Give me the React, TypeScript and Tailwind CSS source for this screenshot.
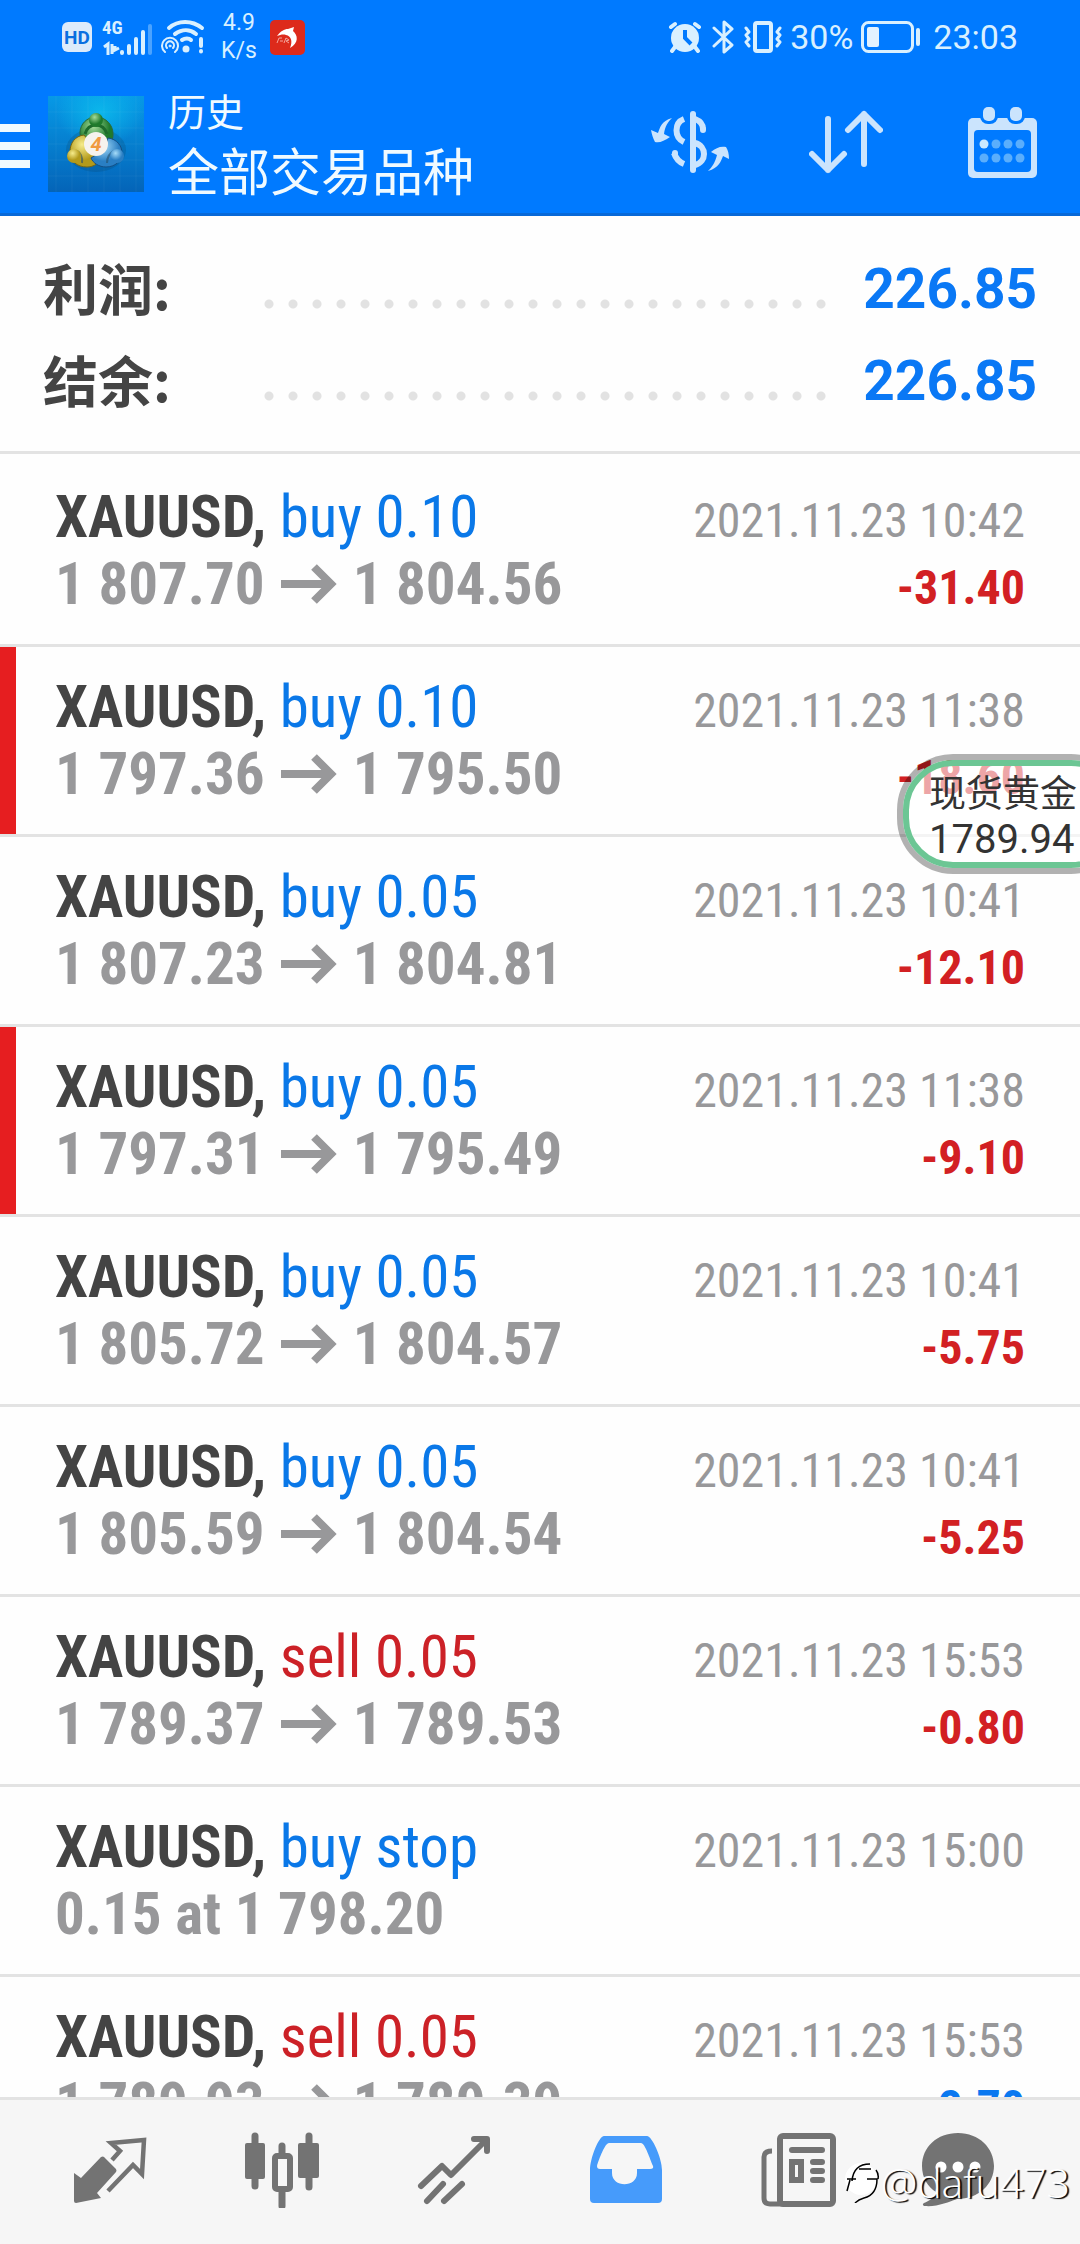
import React from 'react';

type Side = 'buy' | 'sell';

interface Deal {
    side: Side;
    label: string;
    open: string;
    close?: string;
    time: string;
    profit?: string;
    gain?: boolean;
    stopped?: boolean;
}

const deals: Deal[] = [
    { side: 'buy', label: 'buy 0.10', open: '1 807.70', close: '1 804.56', time: '2021.11.23 10:42', profit: '-31.40' },
    { side: 'buy', label: 'buy 0.10', open: '1 797.36', close: '1 795.50', time: '2021.11.23 11:38', profit: '-18.60', stopped: true },
    { side: 'buy', label: 'buy 0.05', open: '1 807.23', close: '1 804.81', time: '2021.11.23 10:41', profit: '-12.10' },
    { side: 'buy', label: 'buy 0.05', open: '1 797.31', close: '1 795.49', time: '2021.11.23 11:38', profit: '-9.10', stopped: true },
    { side: 'buy', label: 'buy 0.05', open: '1 805.72', close: '1 804.57', time: '2021.11.23 10:41', profit: '-5.75' },
    { side: 'buy', label: 'buy 0.05', open: '1 805.59', close: '1 804.54', time: '2021.11.23 10:41', profit: '-5.25' },
    { side: 'sell', label: 'sell 0.05', open: '1 789.37', close: '1 789.53', time: '2021.11.23 15:53', profit: '-0.80' },
    { side: 'buy', label: 'buy stop', open: '0.15 at 1 798.20', time: '2021.11.23 15:00' },
    { side: 'sell', label: 'sell 0.05', open: '1 789.93', close: '1 789.39', time: '2021.11.23 15:53', profit: '2.70', gain: true },
];

const totals = [
    { label: '利润:', value: '226.85' },
    { label: '结余:', value: '226.85' },
];

const StatusBar: React.FC = () => (
    <div className="flex h-[74px] items-center justify-between px-[62px] text-[#d9f0ff]">
        <div className="flex items-center">
            <span className="h-[30px] w-[30px] rounded-[6px] bg-[#dcebfb] text-center text-[19px] leading-[31px] font-bold text-[#0a6fe0]">HD</span>
            <div className="ml-[10px] h-[34px] w-[50px]">
                <div className="h-[16px] font-['Roboto_Condensed',sans-serif] text-[19px] leading-[16px] font-bold">4G</div>
                <svg className="-mt-[14px] h-[34px] w-[50px]" viewBox="0 0 50 34" fill="none" stroke="currentColor">
                    <path d="M2 25l4-3v11M10 22v10M13 24v4l4-2" strokeWidth="3" />
                    <path d="M20 30v1M27 24v7M34 17v14M41 10v21" strokeWidth="4" strokeLinecap="round" />
                    <path d="M48 4v27" stroke="#4ba3ff" strokeWidth="4" strokeLinecap="round" />
                </svg>
            </div>
            <svg className="ml-[9px] h-[34px] w-[44px]" viewBox="0 0 44 34" fill="none" stroke="currentColor" strokeLinecap="round">
                <path d="M8 8c9-8 23-8 33 0" strokeWidth="4" />
                <path d="M14 14c7-5 15-5 21 0" strokeWidth="4" />
                <path d="M21 20c3-2 7-2 9 0" strokeWidth="4" />
                <circle cx="25" cy="29" r="3.5" fill="currentColor" stroke="none" />
                <path d="M40 19v7M40 31v.5" strokeWidth="4" />
                <path d="M4 32a8 8 0 1 1 10 0M6 28a4 4 0 1 1 6 0" strokeWidth="2" />
                <circle cx="9" cy="26" r="1" fill="currentColor" />
            </svg>
            <div className="ml-[16px] w-[36px] text-center text-[23px] leading-[28px]">
                <div>4.9</div>
                <div>K/s</div>
            </div>
            <svg className="ml-[13px] h-[35px] w-[35px]" viewBox="0 0 35 35" fill="none">
                <rect width="35" height="35" rx="5" fill="#dd2a1b" />
                <path d="M7 16c4-5 7-7 11-7l6-2-1 4c5 4 6 12-3 17 3-7 1-12-4-13-3-1-6 0-9 1z" fill="#fff" />
                <path d="M7 23l2-5h3M10 21h3M14 23l2-5 3 2-3 1 3 2" stroke="#f3a59c" />
            </svg>
        </div>
        <div className="flex items-center text-[34px] leading-[40px]">
            <svg className="h-[32px] w-[34px]" viewBox="0 0 34 32">
                <path d="M3 6l4-3M31 6l-4-3M7 26l-3 4M27 26l3 4" stroke="currentColor" strokeWidth="4" strokeLinecap="round" />
                <circle cx="17" cy="17" r="14" fill="currentColor" />
                <path d="M17 9v8l6 6" stroke="#007aff" strokeWidth="4" fill="none" />
            </svg>
            <svg className="ml-[10px] h-[34px] w-[22px]" viewBox="0 0 22 34" fill="none" stroke="currentColor" strokeWidth="3" strokeLinecap="round" strokeLinejoin="round">
                <path d="M2 8l18 17-8 7V2l8 7L2 26" />
            </svg>
            <svg className="ml-[10px] h-[32px] w-[38px]" viewBox="0 0 38 32" fill="none" stroke="currentColor" strokeWidth="3" strokeLinecap="round" strokeLinejoin="round">
                <rect x="11" y="2" width="16" height="28" rx="2" strokeWidth="4" />
                <path d="M2 7l3 4-3 3 3 4-3 3 3 4M36 7l-3 4 3 3-3 4 3 3-3 4" />
            </svg>
            <span className="ml-[8px]">30%</span>
            <svg className="ml-[8px] h-[34px] w-[60px]" viewBox="0 0 60 34" fill="none">
                <rect x="1.5" y="2.5" width="50" height="29" rx="6" stroke="currentColor" strokeWidth="3" />
                <rect x="6" y="7" width="12" height="20" rx="2" fill="#e3f2ff" />
                <path d="M57 10v14" stroke="currentColor" strokeWidth="4" strokeLinecap="round" />
            </svg>
            <span className="ml-[12px]">23:03</span>
        </div>
    </div>
);

const AppLogo: React.FC = () => (
    <svg className="h-[96px] w-[96px]" viewBox="0 0 96 96">
        <defs>
            <linearGradient id="sky" x1="0" y1="0" x2="0" y2="1">
                <stop offset="0" stopColor="#0799e6" />
                <stop offset="1" stopColor="#0464b8" />
            </linearGradient>
            <radialGradient id="glow">
                <stop offset="0" stopColor="#0cc0ee" stopOpacity=".8" />
                <stop offset="1" stopColor="#0cc0ee" stopOpacity="0" />
            </radialGradient>
            <radialGradient id="green" cx=".4" cy=".3">
                <stop offset="0" stopColor="#a5dc9a" />
                <stop offset="1" stopColor="#1f7a2c" />
            </radialGradient>
            <radialGradient id="yellow" cx=".4" cy=".3">
                <stop offset="0" stopColor="#f6ec8c" />
                <stop offset="1" stopColor="#b39a1a" />
            </radialGradient>
            <radialGradient id="blue" cx=".4" cy=".3">
                <stop offset="0" stopColor="#a6dcf8" />
                <stop offset="1" stopColor="#2a7fc4" />
            </radialGradient>
        </defs>
        <rect width="96" height="96" fill="url(#sky)" />
        <ellipse cx="52" cy="16" rx="44" ry="34" fill="url(#glow)" />
        <path d="M8 0v96M24 0v96M40 0v96M56 0v96M72 0v96M88 0v96M0 16h96M0 32h96M0 48h96M0 64h96M0 80h96" stroke="#fff" strokeOpacity=".05" />
        <ellipse cx="48" cy="54" rx="30" ry="22" fill="#083a5c" opacity=".2" />
        <path d="M48 21c10 0 17 8 17 17 0 7-3 12-7 15L37 48c-3-3-5-7-5-11 0-9 7-16 16-16z" fill="url(#green)" stroke="#2c6a34" />
        <path d="M36 39c-9 1-14 8-14 17s7 15 17 15c6 0 10-3 13-6L40 44z" fill="url(#yellow)" stroke="#756612" />
        <path d="M60 42c9 1 14 8 14 15 0 8-7 14-16 14-7 0-13-4-15-9l14-9z" fill="url(#blue)" stroke="#144f85" />
        <path d="M37 38c2-7 6-9 11-9s9 3 11 9" stroke="#1e6b2c" strokeWidth="3" fill="none" />
        <path d="M29 55c3 1 6 6 5 12M66 55c-4 2-7 6-7 12" stroke="#27506b" strokeWidth="2" strokeOpacity=".6" fill="none" />
        <circle cx="48" cy="24" r="7" fill="url(#green)" />
        <circle cx="26" cy="60" r="7" fill="url(#yellow)" />
        <circle cx="69" cy="60" r="7" fill="url(#blue)" />
        <circle cx="48" cy="48" r="12" fill="#f6f3ee" />
        <text x="48" y="55" textAnchor="middle" fontSize="20" fontWeight="bold" fontStyle="italic" fill="#f09a40">4</text>
    </svg>
);

const Header: React.FC = () => (
    <header className="border-b-[3px] border-[#0869d8] bg-[#007aff] text-[#f0faff]">
        <StatusBar />
        <div className="flex h-[139px] items-center pr-[43px]">
            <button aria-label="Menu" className="flex w-[30px] flex-col gap-[10px] pt-1">
                <span className="h-[8px] bg-[#f0faff]" />
                <span className="h-[8px] bg-[#f0faff]" />
                <span className="h-[8px] bg-[#f0faff]" />
            </button>
            <div className="ml-[18px]"><AppLogo /></div>
            <div className="ml-[24px] flex-1 pt-[5px]">
                <div className="text-[38px] leading-[56px]">历史</div>
                <h1 className="text-[51px] leading-[66px]">全部交易品种</h1>
            </div>
            <div className="flex items-center pb-[3px] text-[#cbe4fd]">
                <button aria-label="Currency">
                    <svg className="h-[64px] w-[78px]" viewBox="0 0 78 64" fill="none" stroke="currentColor" strokeWidth="6">
                        <path d="M42 4v56" strokeLinecap="round" />
                        <path d="M33 9c-10 4-10 18 0 23M23 43c2 6 5 9 10 11" />
                        <path d="M24 43v1M52 19v1" strokeLinecap="round" />
                        <path d="M44 9c5 2 8 5 8 10M44 33c12 3 12 19 0 22" />
                        <path d="M21 8C10 11 9 18 7 23L0 20c1 5 2 8 4 12 5 1 9-1 15-5l-6-3c1-8 4-12 8-16zM57 61c11-3 13-10 15-15l6 3c0-5-1-9-3-12-6-1-10 1-15 5l6 3c-2 8-5 12-9 16z" fill="currentColor" stroke="none" />
                    </svg>
                </button>
                <button aria-label="Sort" className="ml-[80px]">
                    <svg className="h-[64px] w-[74px]" viewBox="0 0 74 64" fill="none" stroke="currentColor" strokeWidth="6" strokeLinecap="round" strokeLinejoin="round">
                        <path d="M19 9v51M3 44l16 16 16-16M55 54V4M39 20L55 4l16 16" />
                    </svg>
                </button>
                <button aria-label="Period" className="ml-[85px]">
                    <svg className="h-[71px] w-[69px]" viewBox="0 0 69 71">
                        <rect y="11" width="69" height="60" rx="5" fill="currentColor" />
                        <rect x="12" y="-3" width="18" height="20" rx="8" fill="#007aff" />
                        <rect x="39" y="-3" width="18" height="20" rx="8" fill="#007aff" />
                        <rect x="15" width="12" height="14" rx="5" fill="currentColor" />
                        <rect x="42" width="12" height="14" rx="5" fill="currentColor" />
                        <rect x="6" y="23" width="57" height="42" rx="4" fill="#007aff" />
                        <g fill="#5aaefc">
                            <circle cx="16" cy="37" r="4.5" fill="#cbe9ff" />
                            <circle cx="28" cy="37" r="4.5" />
                            <circle cx="40" cy="37" r="4.5" />
                            <circle cx="52" cy="37" r="4.5" />
                            <circle cx="16" cy="51" r="4.5" />
                            <circle cx="28" cy="51" r="4.5" />
                            <circle cx="40" cy="51" r="4.5" />
                            <circle cx="52" cy="51" r="4.5" />
                        </g>
                    </svg>
                </button>
            </div>
        </div>
    </header>
);

const Totals: React.FC = () => (
    <dl className="border-b-[3px] border-[#e3e3e3] px-[43px] pt-[27px] pb-[24px]">
        {totals.map((row) => (
            <div key={row.label} className="flex h-[92px] items-center font-bold">
                <dt className="w-[214px] pb-[6px] font-['Noto_Sans_CJK_SC',sans-serif] text-[55px] leading-[92px] text-[#444]">{row.label}</dt>
                <dd className="flex flex-1 items-center justify-between">
                    <span className="mt-[30px] h-[24px] w-[576px] bg-[radial-gradient(circle,#e2e2e2_4px,transparent_5px)] bg-[length:24px_24px]" />
                    <span className="text-[55px] leading-[92px] text-[#0a78f5]">{row.value}</span>
                </dd>
            </div>
        ))}
    </dl>
);

const Arrow: React.FC = () => (
    <svg className="mx-[16px] inline-block h-[40px] w-[56px]" viewBox="0 0 56 40" fill="none" stroke="currentColor" strokeWidth="8">
        <path d="M0 20h50M33 3l17 17-17 17" />
    </svg>
);

const DealRow: React.FC<{ deal: Deal }> = ({ deal }) => (
    <li
        className={`flex h-[190px] justify-between border-t-[3px] border-[#e3e3e3] pr-[55px] pt-[26px] font-['Roboto_Condensed','Liberation_Sans_Narrow',sans-serif] text-[#98989a] first:border-transparent ${
            deal.stopped ? 'bg-[linear-gradient(to_right,#e61e20_16px,transparent_16px)]' : ''
        }`}
    >
        <div className="pl-[55px] text-[59px] leading-[67px] whitespace-nowrap">
            <div>
                <b className="text-[#444]">XAUUSD,</b>{' '}
                <span className={deal.side === 'buy' ? 'text-[#0a78e8]' : 'text-[#cc2127]'}>{deal.label}</span>
            </div>
            <div className="flex items-center font-bold">
                {deal.open}
                {deal.close && <><Arrow />{deal.close}</>}
            </div>
        </div>
        <div className="pt-[4px] text-right text-[48px] leading-[67px] whitespace-nowrap">
            <div>{deal.time}</div>
            <div className={`font-bold ${deal.gain ? 'text-[#0a78f0]' : 'text-[#d22023]'}`}>{deal.profit}</div>
        </div>
    </li>
);

const TabButton: React.FC<{ label: string; className?: string; children: React.ReactNode }> = ({ label, className = 'flex-1', children }) => (
    <button aria-label={label} className={`flex justify-center ${className}`}>
        <svg className="h-[76px] w-[76px]" viewBox="0 0 76 76" fill="none">{children}</svg>
    </button>
);

const TabBar: React.FC = () => (
    <nav className="relative flex h-[147px] flex-none items-start border-t-[3px] border-[#e3e3e3] bg-[#f6f6f6] pt-[32px] pr-12 pl-6 text-[#737373]">
        <TabButton label="Quotes">
            <path d="M2 41l7 5 20-21q2-1 3 0l12 12q1 2 0 3L25 61l4 5-25 5q-2 0-2-2z" fill="currentColor" />
            <path d="M40 28l8-9-9-8 33-3-2 34-9-9-25 26" stroke="currentColor" strokeWidth="4.5" />
        </TabButton>
        <TabButton label="Charts">
            <path d="M11 4v50M65 4v51M38 14v14M38 58v16" stroke="currentColor" strokeWidth="7" strokeLinecap="round" />
            <rect x="1" y="11" width="20" height="36" rx="2" fill="currentColor" />
            <rect x="54" y="11" width="21" height="35" rx="2" fill="currentColor" />
            <rect x="31" y="24" width="15" height="33" rx="2" fill="#f6f6f6" stroke="currentColor" strokeWidth="6" />
        </TabButton>
        <TabButton label="Trade">
            <path d="M5 54l21-20 9 9L70 8M58 7h13v12M11 69l16-17M28 69l18-17" stroke="currentColor" strokeWidth="6" strokeLinecap="round" strokeLinejoin="round" />
        </TabButton>
        <TabButton label="History">
            <path d="M16 4h43c5 0 15 22 15 34v29q0 4-4 4H6q-4 0-4-4V38C2 26 11 4 16 4zm5 7c-4 0-10 16-12 23q0 3 3 3h12v4c0 15 25 15 25 0v-4h13q4 0 3-3c-3-7-8-23-12-23z" fill="#469bfb" fillRule="evenodd" />
        </TabButton>
        <TabButton label="News">
            <rect x="20" y="4" width="53" height="68" rx="3" stroke="currentColor" strokeWidth="6" />
            <path d="M12 19q-8 0-8 6v41q0 6 6 6h14" stroke="currentColor" strokeWidth="5" />
            <path d="M32 18h30M53 30h9M53 39h9M53 48h9" stroke="currentColor" strokeWidth="6" strokeLinecap="round" />
            <rect x="32" y="30" width="9" height="18" stroke="currentColor" strokeWidth="6" />
        </TabButton>
        <TabButton label="Messages" className="w-[148px] flex-none">
            <path d="M38 1C17 1 2 15 2 34c0 12 6 21 14 26-2 6-7 9-12 11-2 1-1 3 1 3 12 1 24-4 32-7 22 0 37-15 37-33S59 1 38 1z" fill="currentColor" />
            <g fill="#fff">
                <circle cx="21" cy="35" r="5.5" />
                <circle cx="38" cy="35" r="5.5" />
                <circle cx="55" cy="35" r="5.5" />
            </g>
        </TabButton>
        <div className="pointer-events-none absolute top-[58px] right-[10px] flex items-center font-['Open_Sans',sans-serif] text-[41px] leading-[48px] font-light text-white [text-shadow:2px_1px_1px_#000]">
            <svg className="h-[42px] w-[36px]" viewBox="0 0 36 42" fill="none">
                <circle cx="16" cy="18" r="16" fill="#fff" />
                <path d="M7 20C8 8 14 3 25 3M2 18h9M5 19L2 30M22 18h10c0 12-5 17-13 19-4 1-7 3-9 5M14 8h12M31 9q3 4 2 9" stroke="#000" strokeWidth="1.5" />
            </svg>
            @dafu473
        </div>
    </nav>
);

const QuoteBubble: React.FC = () => (
    <aside className="absolute top-[754px] left-[calc(100%-183px)] h-[120px] w-[230px] rounded-[56px] border-[6px] border-black/30">
        <div className="h-full rounded-[50px] border-[6px] border-[#6cc694] bg-white/60 pt-[8px] pl-[20px] text-[#333]">
            <div className="text-[37px] leading-[42px]">现货黄金</div>
            <div className="text-[40px] leading-[48px]">1789.94</div>
        </div>
    </aside>
);

const App: React.FC = () => (
    <div className="relative flex h-screen flex-col overflow-hidden bg-[#fefefe] font-['Roboto','Noto_Sans_CJK_SC',sans-serif]">
        <Header />
        <main className="min-h-0 flex-1 overflow-hidden">
            <Totals />
            <ul>
                {deals.map((deal, i) => <DealRow key={i} deal={deal} />)}
            </ul>
        </main>
        <TabBar />
        <QuoteBubble />
    </div>
);

export default App;
